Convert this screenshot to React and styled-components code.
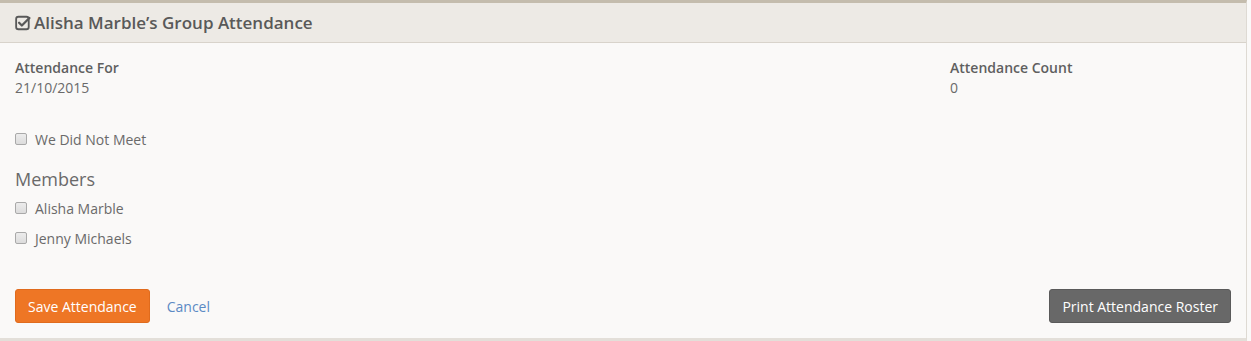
import React from "react";
import styled, { createGlobalStyle } from "styled-components";

const Global = createGlobalStyle`
  html, body { margin: 0; padding: 0; background: #faf9f8; }
  body { font-family: "Open Sans", "Liberation Sans", sans-serif; font-size: 14px; color: #6a6a6a; }
  * { box-sizing: border-box; }
`;

const Panel = styled.section`
  width: 1247px;
  background: #faf9f8;
  border-top: 3px solid #c4bcad;
  border-right: 1px solid #dedad3;
  border-bottom: 3px solid #e3dfd9;
`;

const Header = styled.header`
  height: 40px;
  background: #edeae5;
  border-bottom: 1px solid #d8d3cb;
  display: flex;
  align-items: center;
  padding: 0 15px;
  gap: 3px;
`;

const Title = styled.h1`
  margin: 0;
  font-size: 17px;
  font-weight: 600;
  color: #595959;
  line-height: 1;
`;

const Body = styled.div`
  padding: 15px 15px 15px;
`;

const Row = styled.div`
  display: grid;
  grid-template-columns: 920px 1fr;
  gap: 15px;
`;

const Label = styled.div`
  font-weight: 600;
  color: #5f5f5f;
  line-height: 20px;
`;

const Value = styled.div`
  color: #6a6a6a;
  line-height: 20px;
`;

const CheckRow = styled.label`
  display: flex;
  align-items: center;
  gap: 8px;
  height: 20px;
  margin-top: ${(p) => p.$mt || 0}px;
  color: #6a6a6a;
`;

const Box = styled.span`
  width: 12px;
  height: 12px;
  border: 1px solid #a9a9a9;
  border-radius: 2px;
  background: linear-gradient(#ececec, #dcdcdc);
  display: inline-block;
`;

const Heading = styled.h2`
  margin: 19px 0 0;
  font-size: 18px;
  font-weight: 400;
  color: #6a6a6a;
  line-height: 22px;
`;

const Actions = styled.div`
  display: flex;
  align-items: center;
  margin-top: 41px;
`;

const Button = styled.button`
  height: 34px;
  padding: 0 12px;
  border-radius: 3px;
  font-family: "Open Sans", "Liberation Sans", sans-serif;
  font-size: 14px;
  color: #fff;
  border: 1px solid ${(p) => (p.$variant === "dark" ? "#5a5a5a" : "#e06b1d")};
  background: ${(p) => (p.$variant === "dark" ? "#686868" : "#ee7625")};
  cursor: pointer;
`;

const LinkBtn = styled.a`
  margin-left: 17px;
  color: #5b8ac4;
  text-decoration: none;
  font-size: 14px;
`;

const Spacer = styled.div`
  flex: 1;
`;

function CheckIcon() {
  return (
    <svg width="16" height="16" viewBox="0 0 14 14" aria-hidden="true">
      <rect x="1" y="1.5" width="11" height="11" rx="2" fill="none" stroke="#595959" strokeWidth="1.6" />
      <path d="M3.6 6.8 L6 9.2 L12.6 2.6" fill="none" stroke="#595959" strokeWidth="2" strokeLinecap="round" strokeLinejoin="round" />
    </svg>
  );
}

export default function App() {
  return (
    <>
      <Global />
      <Panel>
        <Header>
          <CheckIcon />
          <Title>Alisha Marble’s Group Attendance</Title>
        </Header>
        <Body>
          <Row>
            <div>
              <Label>Attendance For</Label>
              <Value>21/10/2015</Value>
            </div>
            <div>
              <Label>Attendance Count</Label>
              <Value>0</Value>
            </div>
          </Row>
          <CheckRow $mt={31}>
            <Box />
            We Did Not Meet
          </CheckRow>
          <Heading>Members</Heading>
          <CheckRow $mt={8}>
            <Box />
            Alisha Marble
          </CheckRow>
          <CheckRow $mt={10}>
            <Box />
            Jenny Michaels
          </CheckRow>
          <Actions>
            <Button>Save Attendance</Button>
            <LinkBtn href="#">Cancel</LinkBtn>
            <Spacer />
            <Button $variant="dark">Print Attendance Roster</Button>
          </Actions>
        </Body>
      </Panel>
    </>
  );
}
